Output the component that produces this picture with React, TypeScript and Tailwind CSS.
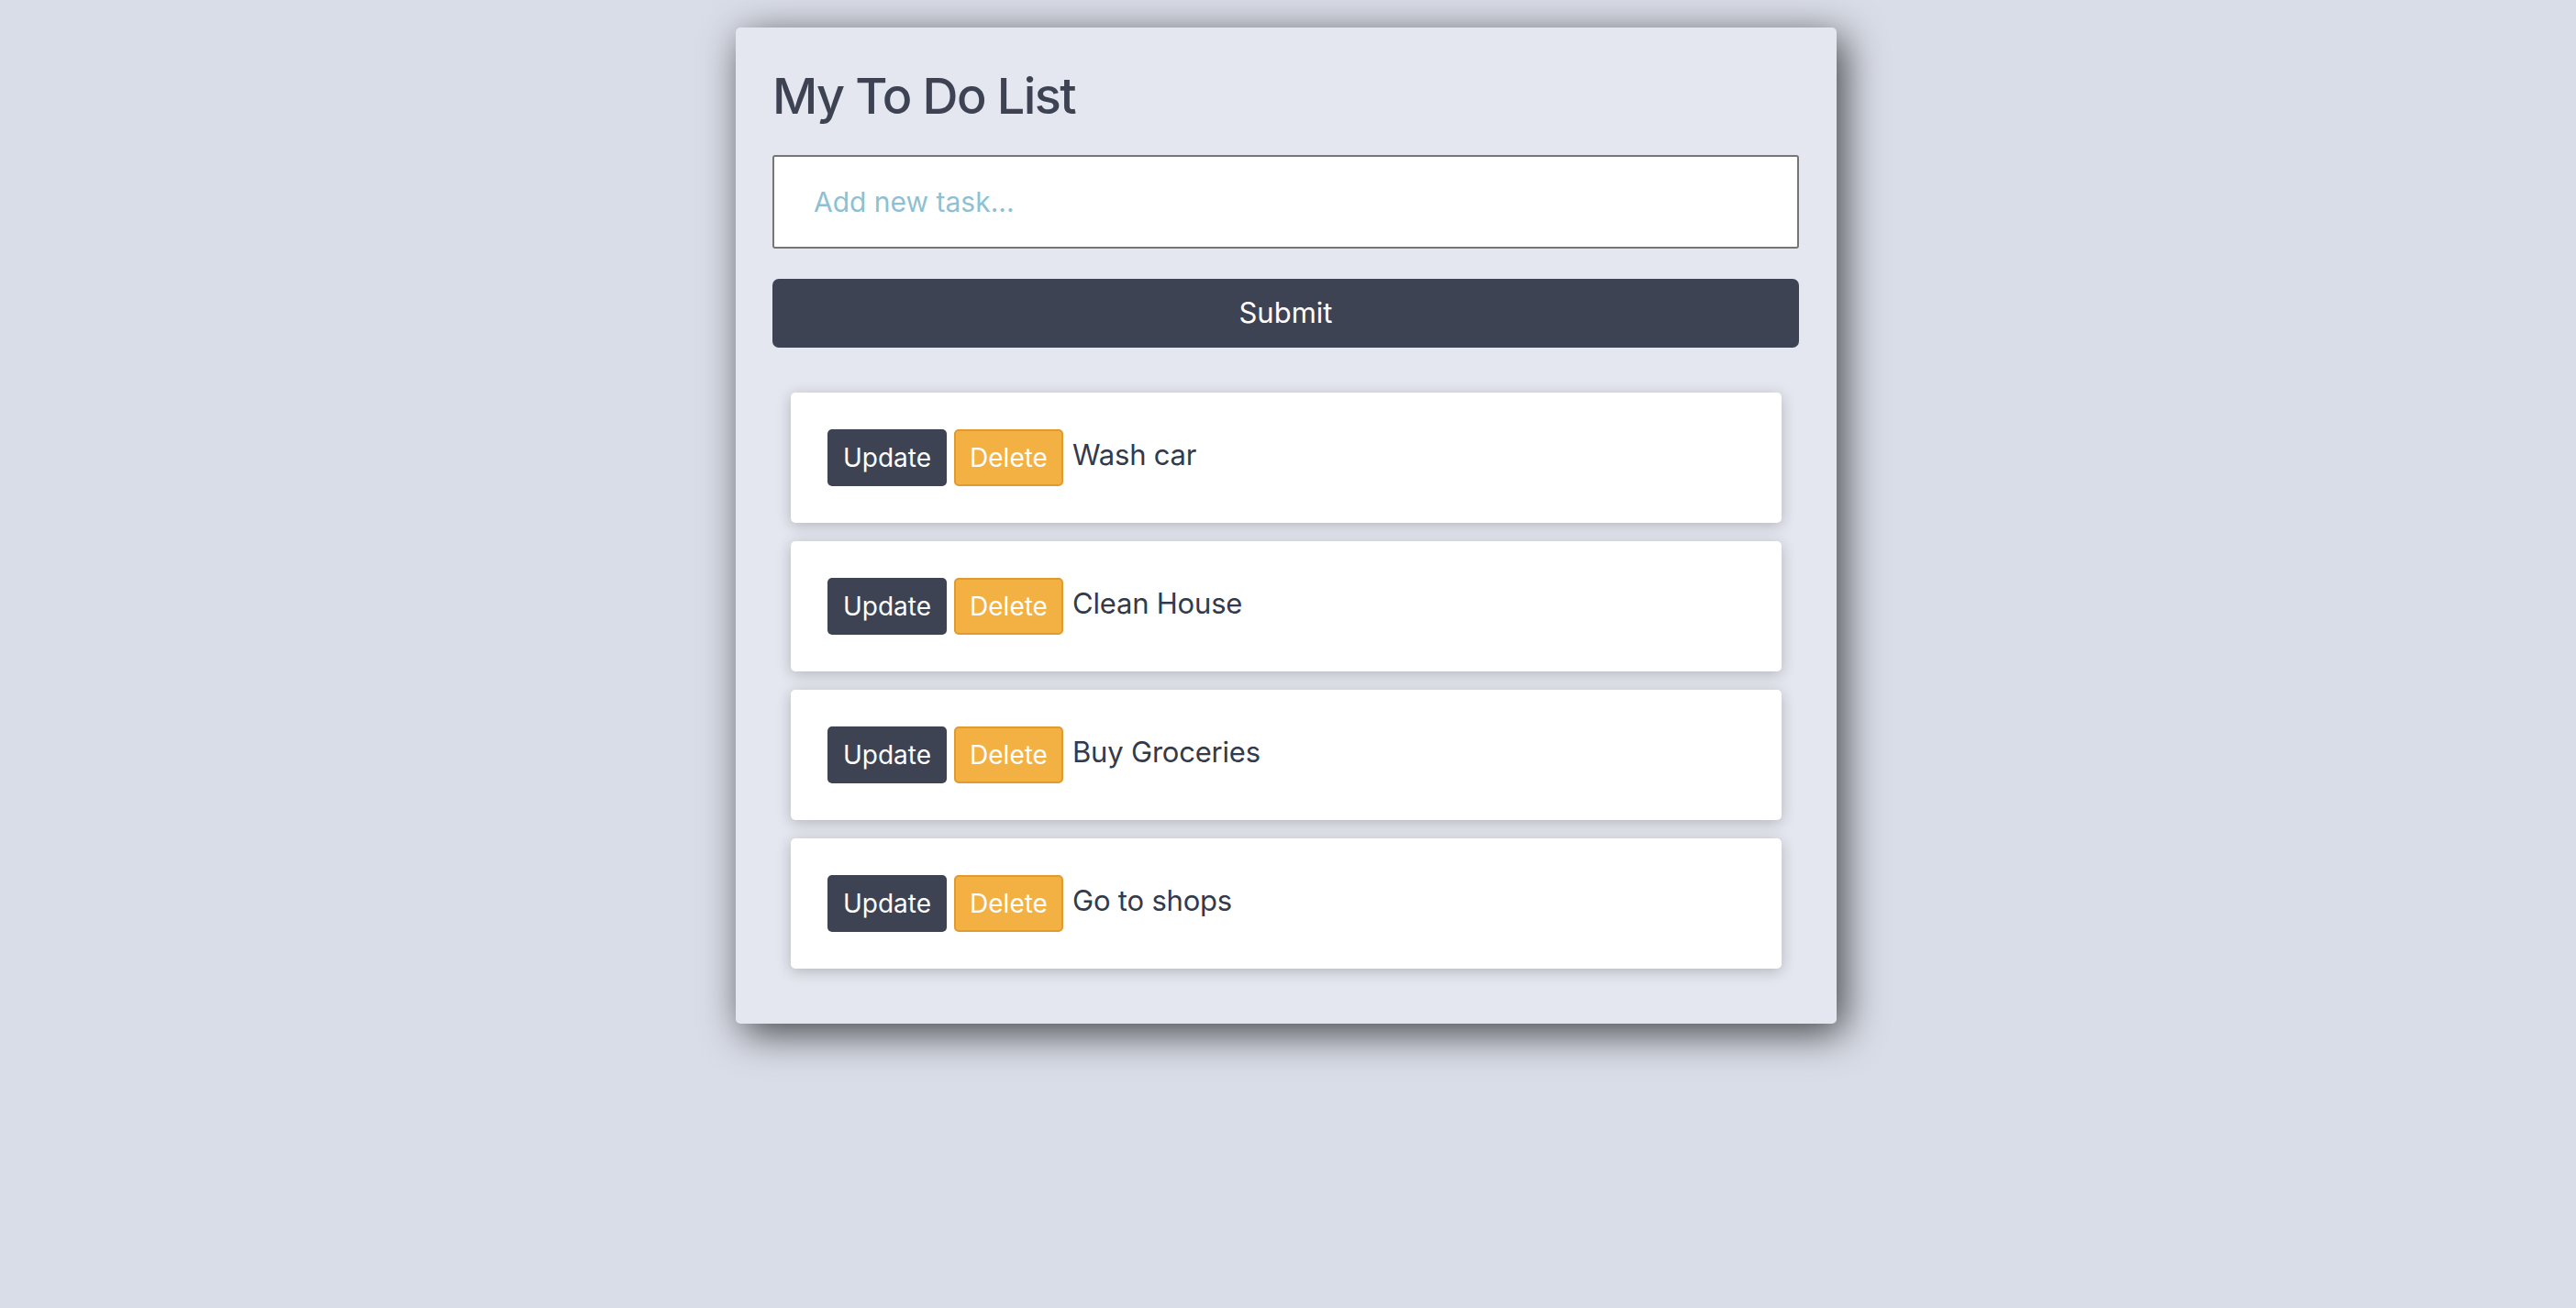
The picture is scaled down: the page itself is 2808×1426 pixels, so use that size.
import React, { useState } from 'react';

interface Task {
  id: number;
  text: string;
}

const initialTasks: Task[] = [
  { id: 1, text: 'Wash car' },
  { id: 2, text: 'Clean House' },
  { id: 3, text: 'Buy Groceries' },
  { id: 4, text: 'Go to shops' },
];

const TaskRow = ({ task }: { task: Task }) => (
  <li className="flex h-[142px] items-center rounded-[5px] bg-white pl-[40px] shadow-[0_3px_16px_rgba(0,0,0,0.22)]">
    <button
      className="h-[62px] w-[130px] rounded-[5px] bg-[#3d4353] text-[28px] text-white"
      type="button"
    >
      Update
    </button>
    <button
      className="ml-[8px] h-[62px] w-[119px] rounded-[5px] border-2 border-[#e09a2e] bg-[#f2b142] text-[28px] text-white"
      type="button"
    >
      Delete
    </button>
    <span className="-mt-[6px] ml-[10px] text-[31px] tracking-[-0.2px] text-[#333a4a]">
      {task.text}
    </span>
  </li>
);

const App = () => {
  const [tasks] = useState<Task[]>(initialTasks);

  return (
    <div className="min-h-[1426px] bg-[#d9dde7] pt-[30px] font-['Inter',sans-serif]">
      <div className="ml-[802px] w-[1200px] rounded-[5px] bg-[#e4e7ef] pb-[60px] pl-[40px] pr-[41px] pt-[48px] shadow-[8px_10px_44px_rgba(0,0,0,0.7)]">
        <h1 className="text-[54px] font-medium leading-none tracking-[-1.6px] text-[#3d4353]">
          My To Do List
        </h1>
        <input
          className="mt-[37px] h-[102px] w-full rounded-[3px] border-2 border-[#767676] bg-white px-[43px] text-[30px] placeholder:text-[#8fc0d2] focus:outline-none"
          placeholder="Add new task..."
          type="text"
        />
        <button
          className="mt-[33px] h-[75px] w-full rounded-[7px] bg-[#3d4353] text-[31px] text-white"
          type="button"
        >
          Submit
        </button>
        <ul className="ml-[20px] mr-[19px] mt-[49px] flex flex-col gap-[20px]">
          {tasks.map((task) => (
            <TaskRow key={task.id} task={task} />
          ))}
        </ul>
      </div>
    </div>
  );
};

export default App;
